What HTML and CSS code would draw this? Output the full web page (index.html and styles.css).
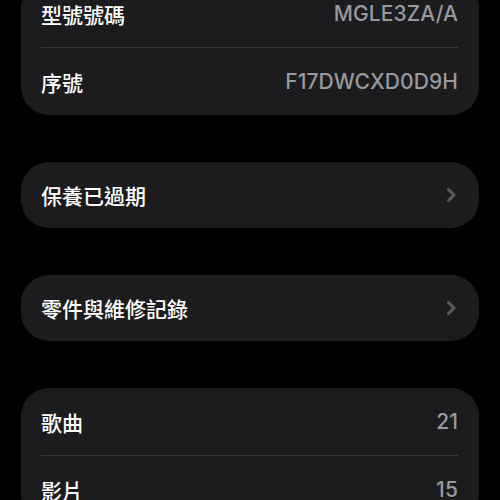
FILE: index.html
```html
<!DOCTYPE html>
<html lang="zh-Hant">
<head>
  <meta charset="UTF-8" />
  <meta name="viewport" content="width=device-width, initial-scale=1" />
  <title>關於本機</title>
  <link rel="stylesheet" href="styles.css">
</head>
<body>

  <div class="page">
    <div class="group">
      <div class="row">
        <span class="label">型號號碼</span>
        <span class="value">MGLE3ZA/A</span>
      </div>
      <div class="row">
        <span class="label">序號</span>
        <span class="value">F17DWCXD0D9H</span>
      </div>
    </div>

    <div class="group single">
      <div class="row">
        <span class="label">保養已過期</span>
        <svg class="chevron" width="10" height="16" viewBox="0 0 10 16"><path d="M2.5 2.5l5.5 5.5-5.5 5.5" fill="none" stroke="#5a5a5f" stroke-width="3" stroke-linecap="round" stroke-linejoin="round"/></svg>
      </div>
    </div>

    <div class="group single">
      <div class="row">
        <span class="label">零件與維修記錄</span>
        <svg class="chevron" width="10" height="16" viewBox="0 0 10 16"><path d="M2.5 2.5l5.5 5.5-5.5 5.5" fill="none" stroke="#5a5a5f" stroke-width="3" stroke-linecap="round" stroke-linejoin="round"/></svg>
      </div>
    </div>

    <div class="group">
      <div class="row">
        <span class="label">歌曲</span>
        <span class="value">21</span>
      </div>
      <div class="row">
        <span class="label">影片</span>
        <span class="value">15</span>
      </div>
    </div>
  </div>

</body>
</html>
```

FILE: styles.css
```css
html, body { margin: 0; background: #000; }
body { font-family: Inter, "Noto Sans CJK TC", sans-serif; overflow: hidden; }
.page { margin-top: -20px; padding: 0 21px; display: flex; flex-direction: column; gap: 47px; }
.group { background: #1c1c1e; border-radius: 28px; padding: 0 21px 0 20px; }
.row {
  height: 67px; display: flex; align-items: center; justify-content: space-between;
  border-top: 1px solid #38383a;
}
.row:first-child { border-top: none; }
.single .row { height: 66px; }
.label { color: #fff; font-size: 21px; font-weight: 500; }
.value { color: #98989f; font-size: 21px; font-weight: 500; letter-spacing: 0.1px; }
.chevron { margin-right: 2px; }
```
